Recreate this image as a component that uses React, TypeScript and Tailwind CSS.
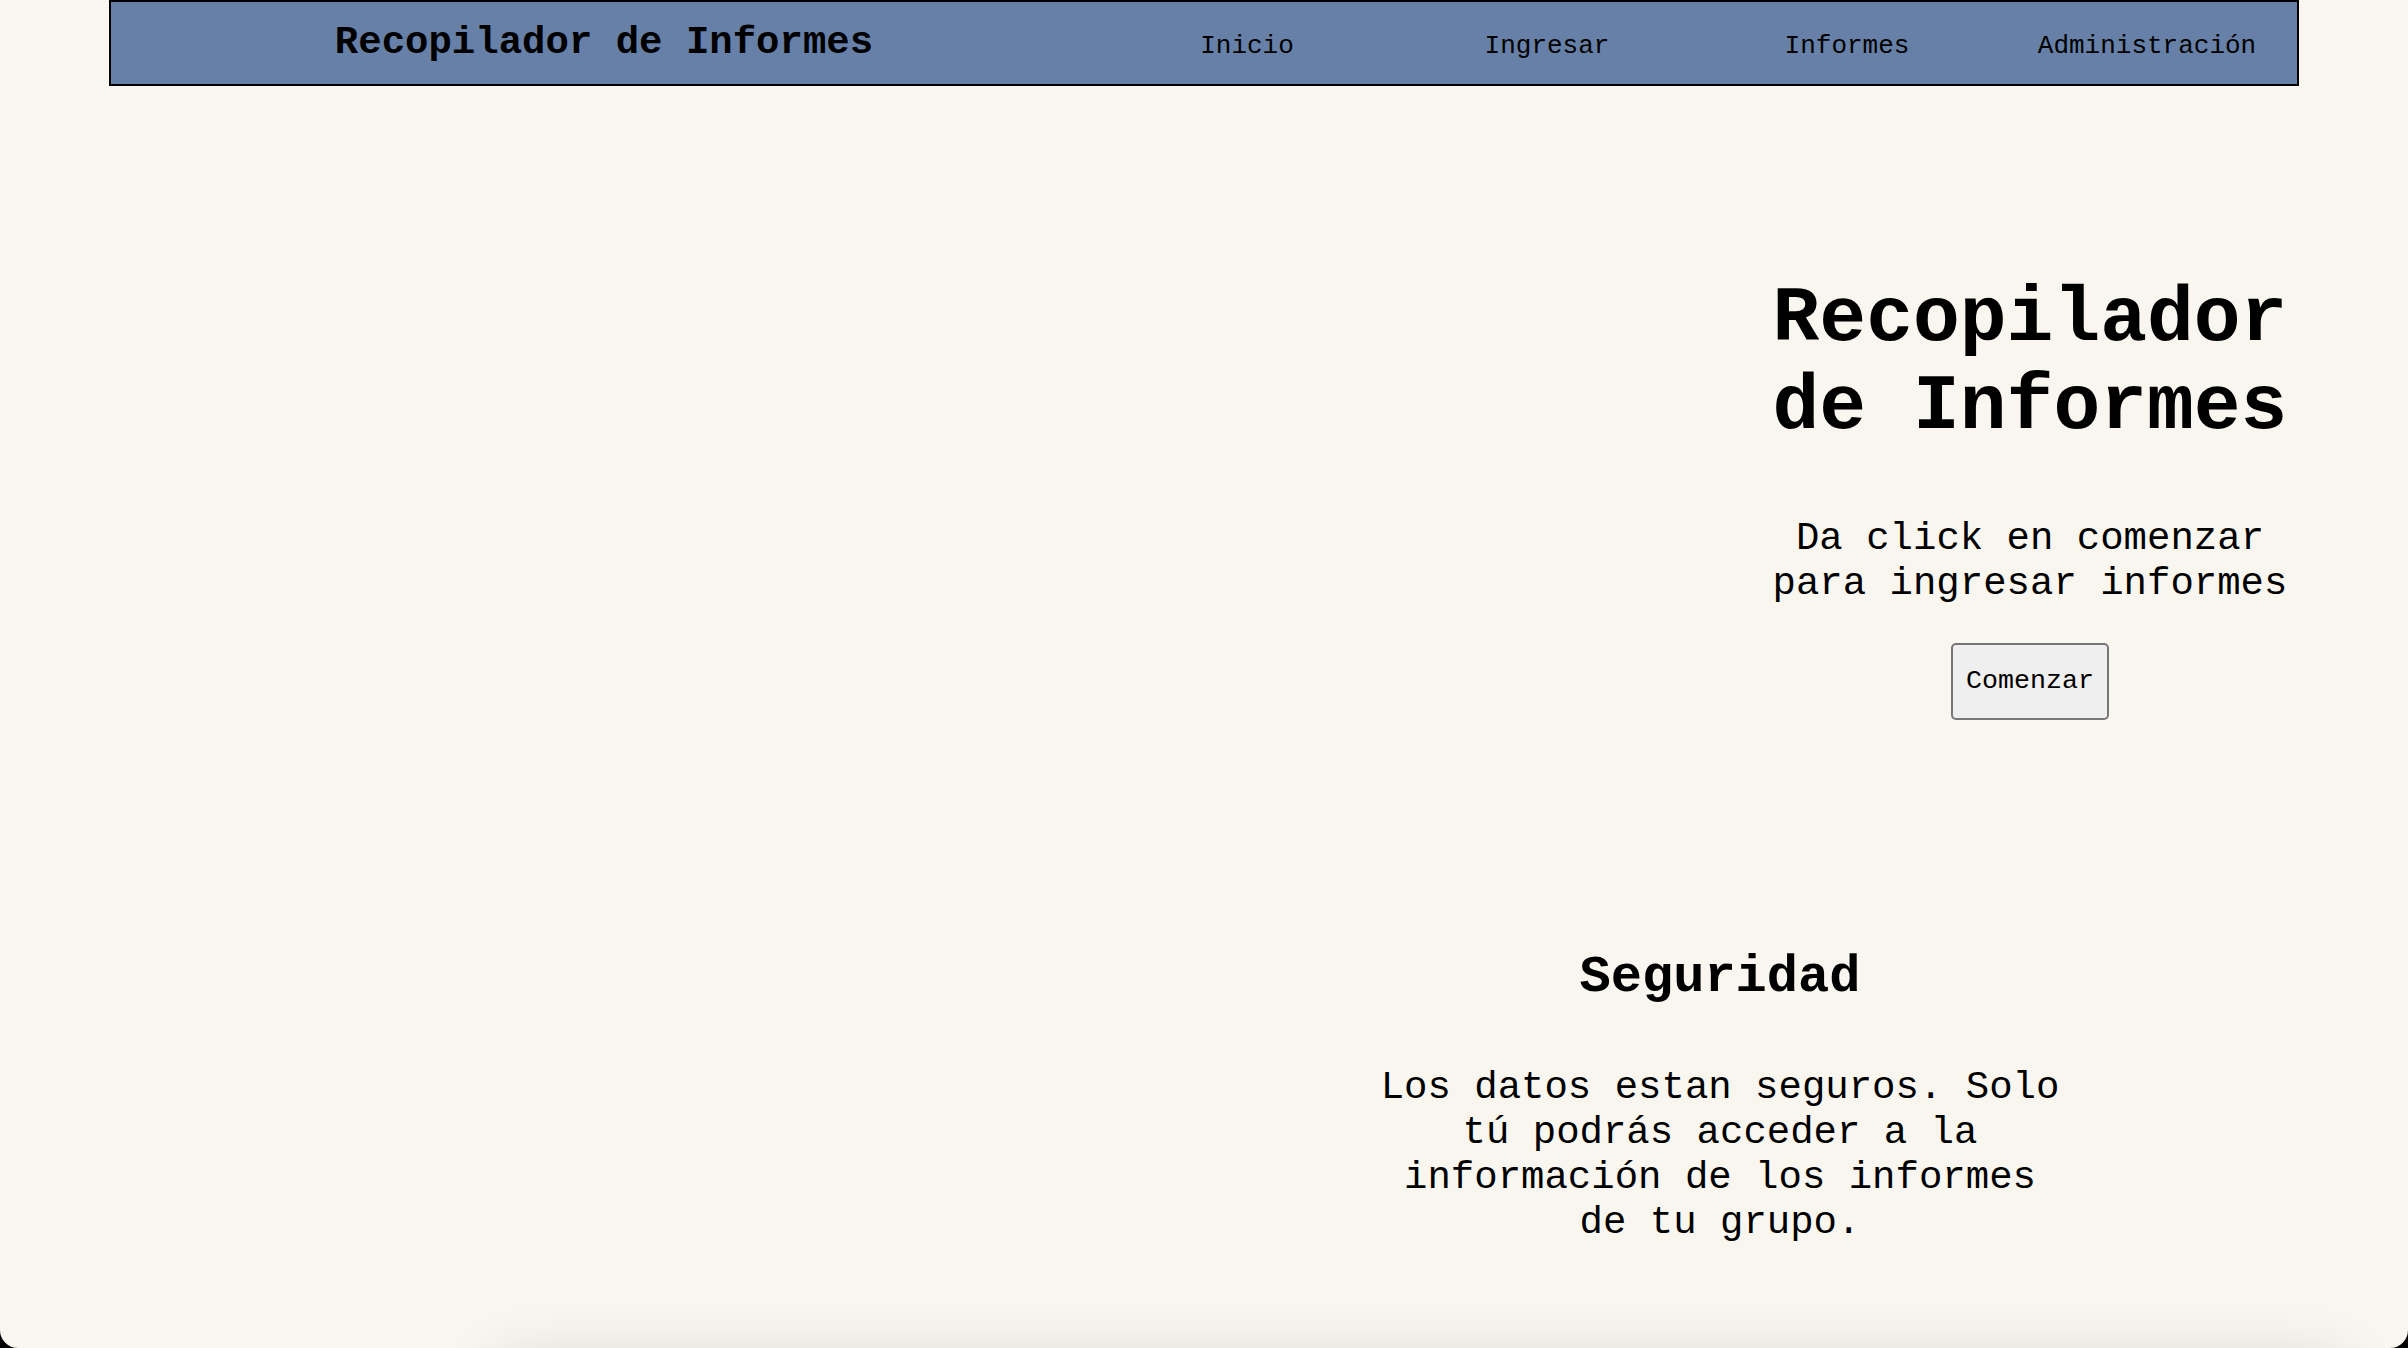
import React from "react";

const mono = { fontFamily: '"Liberation Mono", "Courier New", monospace' };

export default function App() {
  const links = ["Inicio", "Ingresar", "Informes", "Administración"];
  return (
    <div className="h-[1348px] w-full overflow-hidden bg-black" style={mono}>
      <div className="h-full w-full overflow-hidden rounded-b-[18px] bg-[#f8f6ef] text-black">
        <nav className="mx-auto box-border flex h-[86px] w-[2190px] items-baseline border-2 border-black bg-[#6780a7] pt-[12px]">
          <div className="flex-1 text-center text-[39px] font-bold">Recopilador de Informes</div>
          {links.map((l) => (
            <a key={l} className="w-[300px] text-center text-[26px]">
              {l}
            </a>
          ))}
        </nav>

        <main className="mx-auto w-[2190px]">
          <section className="flex justify-end pr-[2px] pt-[189px]">
            <div className="flex w-[534px] flex-col items-center text-center">
              <h1 className="text-[78px] font-bold leading-[88.4px]">Recopilador de Informes</h1>
              <p className="mt-[65px] text-[39px] leading-[45px]">
                Da click en comenzar para ingresar informes
              </p>
              <button className="mt-[36px] box-border flex h-[77px] w-[158px] items-center justify-center rounded-[5px] border-2 border-[#767676] bg-[#efefef] text-[26.67px]">
                Comenzar
              </button>
            </div>
          </section>

          <section className="mt-[228px] ml-[1266px] w-[690px] text-center">
            <h2 className="text-[52px] font-bold leading-[59px]">Seguridad</h2>
            <p className="mt-[59px] text-[39px] leading-[45px]">
              Los datos estan seguros. Solo tú podrás acceder a la información de los informes de tu grupo.
            </p>
          </section>

          <div className="ml-[391px] mt-[120px] h-[200px] w-[1840px] bg-[#f8f6ef] shadow-[0_0_60px_rgba(0,0,0,0.16)]" />
        </main>
      </div>
    </div>
  );
}
